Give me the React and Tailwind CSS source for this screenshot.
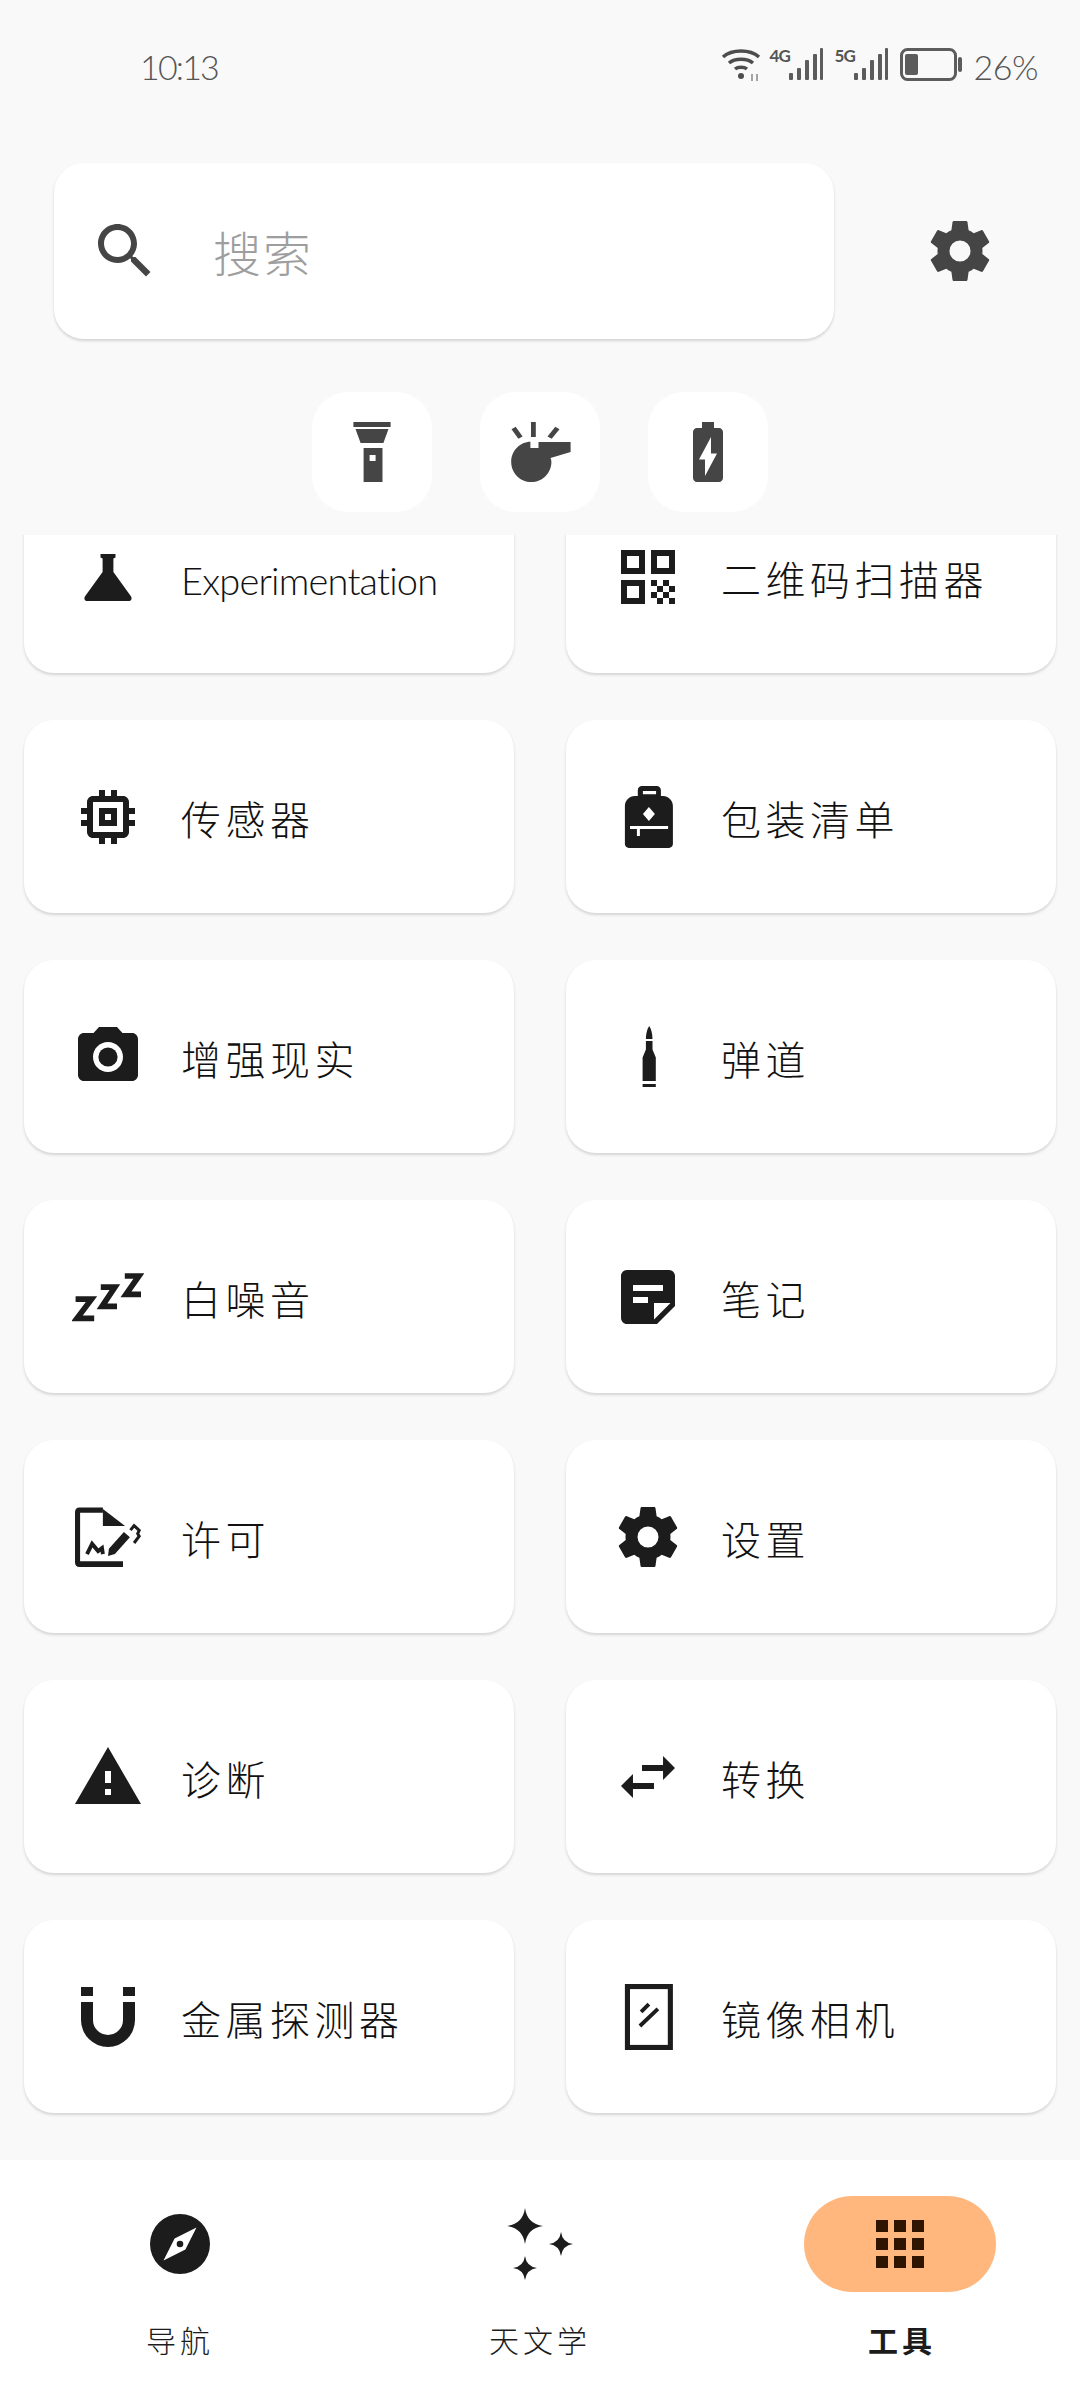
const cjk = { fontFamily: '"Lato", "Noto Sans CJK SC", sans-serif' };

function Icon({ children, className = 'text-[#1c1c1c]' }) {
  return (
    <svg viewBox="0 0 24 24" fill="currentColor" className={`w-[72px] h-[72px] shrink-0 ${className}`}>
      {children}
    </svg>
  );
}

const cog = 'M12,15.5A3.5,3.5 0 0,1 8.5,12A3.5,3.5 0 0,1 12,8.5A3.5,3.5 0 0,1 15.5,12A3.5,3.5 0 0,1 12,15.5M19.43,12.97C19.47,12.65 19.5,12.33 19.5,12C19.5,11.67 19.47,11.34 19.43,11L21.54,9.37C21.73,9.22 21.78,8.95 21.66,8.73L19.66,5.27C19.54,5.05 19.27,4.96 19.05,5.05L16.56,6.05C16.04,5.66 15.5,5.32 14.87,5.07L14.5,2.42C14.46,2.18 14.25,2 14,2H10C9.75,2 9.54,2.18 9.5,2.42L9.13,5.07C8.5,5.32 7.96,5.66 7.44,6.05L4.95,5.05C4.73,4.96 4.46,5.05 4.34,5.27L2.34,8.73C2.21,8.95 2.27,9.22 2.46,9.37L4.57,11C4.53,11.34 4.5,11.67 4.5,12C4.5,12.33 4.53,12.65 4.57,12.97L2.46,14.63C2.27,14.78 2.21,15.05 2.34,15.27L4.34,18.73C4.46,18.95 4.73,19.03 4.95,18.95L7.44,17.94C7.96,18.34 8.5,18.68 9.13,18.93L9.5,21.58C9.54,21.82 9.75,22 10,22H14C14.25,22 14.46,21.82 14.5,21.58L14.87,18.93C15.5,18.67 16.04,18.34 16.56,17.94L19.05,18.95C19.27,19.03 19.54,18.95 19.66,18.73L21.66,15.27C21.78,15.05 21.73,14.78 21.54,14.63L19.43,12.97Z';

const star = (x, y, r) =>
  `M${x} ${y - r}Q${x + r * 0.12} ${y - r * 0.12} ${x + r} ${y}Q${x + r * 0.12} ${y + r * 0.12} ${x} ${y + r}Q${x - r * 0.12} ${y + r * 0.12} ${x - r} ${y}Q${x - r * 0.12} ${y - r * 0.12} ${x} ${y - r}Z`;

const icons = {
  flask: <path d="M9.5 4.3h5v1.2l-.7.3v4.5l5.9 8.2c.4.8 0 1.5-.8 1.5H5.1c-.8 0-1.2-.7-.8-1.5l5.9-8.2V5.8l-.7-.3z" />,
  qr: <path d="M3 11h8V3H3v8zm2-6h4v4H5V5zM3 21h8v-8H3v8zm2-6h4v4H5v-4zM13 3v8h8V3h-8zm6 6h-4V5h4v4zM19 19h2v2h-2zM13 13h2v2h-2zM15 15h2v2h-2zM13 17h2v2h-2zM15 19h2v2h-2zM17 17h2v2h-2zM17 13h2v2h-2zM19 15h2v2h-2z" />,
  chip: <path d="M15 9H9v6h6V9zm-2 4h-2v-2h2v2zm8-2V9h-2V7c0-1.1-.9-2-2-2h-2V3h-2v2h-2V3H9v2H7c-1.1 0-2 .9-2 2v2H3v2h2v2H3v2h2v2c0 1.1.9 2 2 2h2v2h2v-2h2v2h2v-2h2c1.1 0 2-.9 2-2v-2h2v-2h-2v-2h2zm-4 6H7V7h10v10z" />,
  backpack: <path fillRule="evenodd" d="M10 1.700h4.900c.8 0 1.400.6 1.400 1.400V5h.7c1.800 0 3.300 1.500 3.300 3.300V21c0 .7-.6 1.300-1.300 1.300H5.600c-.7 0-1.300-.6-1.300-1.300V8.300C4.300 6.500 5.800 5 7.600 5h1V3.100c0-.8.6-1.400 1.400-1.400zM10.300 3.300v1.100h4.400V3.300zM12.300 8.700l-2 2.300 2 2.300 2-2.300zM6 15v1h2.300v2.300h1V16h9.400v-1z" />,
  camera: (
    <>
      <path d="M9 2L7.170 4H4c-1.100 0-2 .9-2 2v12c0 1.100.9 2 2 2h16c1.100 0 2-.9 2-2V6c0-1.100-.9-2-2-2h-3.170L15 2H9zm3 15c-2.760 0-5-2.240-5-5s2.240-5 5-5 5 2.240 5 5-2.240 5-5 5z" />
      <circle cx="12" cy="12" r="3.200" />
    </>
  ),
  bullet: <path d="M12.400 1.700c.7 1 1.100 2.600 1.100 4.300h-2.200c0-1.700.4-3.300 1.100-4.300zM11.300 6.700h2.200v2.800l1.100 2.700V20h-4.400v-7.800l1.100-2.700zM10.200 21h4.400v1h-4.400z" />,
  zzz: (
    <g fill="none" stroke="currentColor" strokeWidth="1.900">
      <path d="M1.200 12.700h5.300L1.700 19.100h5.700" />
      <path d="M9.600 8.700h4.700l-4.300 6.400h5" />
      <path d="M17.600 5h4.700l-4.300 6.100h5" />
    </g>
  ),
  note: <path d="M19 3H4.990C3.890 3 3 3.900 3 5l.01 14c0 1.100.89 2 1.990 2h10l6-6V5c0-1.100-.9-2-2-2zM7 8h10v2H7V8zm5 6H7v-2h5v2zm2 5.500V14h5.500L14 19.500z" />,
  sign: (
    <>
      <path d="M2.500 2.200h7.800v1.700H2.700v16.200H17V22H2.500C1.500 22 1 21.400 1 20.500V3.700c0-.9.5-1.500 1.500-1.500z" />
      <path d="M10.300 2.700l7.400 5.600h-7.400z" />
      <path d="M12 18.300l.3-2.400 5-5.600 2 1.800-5 5.600z" />
      <path d="M19.500 9.700l1.200-1.500 1.700 1.600-.5 1.100.5.800-1.700 2.300" fill="none" stroke="currentColor" strokeWidth="1" />
      <path d="M5 17.700l1.700-3.400 2 2.400 1.300-1 .3 2" fill="none" stroke="currentColor" strokeWidth="1.300" />
    </>
  ),
  cog: <path d={cog} />,
  warning: <path d="M1 21h22L12 2 1 21zm12-3h-2v-2h2v2zm0-4h-2v-4h2v4z" />,
  swap: <path d="M6.990 11L3 15l3.990 4v-3H14v-2H6.990v-3zM21 9l-3.990-4v3H10v2h7.010v3L21 9z" />,
  magnet: <path d="M3,7V13A9,9 0 0,0 12,22A9,9 0 0,0 21,13V7H17V13A5,5 0 0,1 12,18A5,5 0 0,1 7,13V7M17,5H21V2H17M3,5H7V2H3" />,
  mirror: (
    <>
      <rect x="5.150" y="1.850" width="14.300" height="20.300" fill="none" stroke="currentColor" strokeWidth="1.700" />
      <path d="M9.700 10.300l2.600-2.600M9.300 15l6-5.700" fill="none" stroke="currentColor" strokeWidth="1.300" />
    </>
  ),
};

const tools = [
  ['flask', 'Experimentation', 'qr', '二维码扫描器'],
  ['chip', '传感器', 'backpack', '包装清单'],
  ['camera', '增强现实', 'bullet', '弹道'],
  ['zzz', '白噪音', 'note', '笔记'],
  ['sign', '许可', 'cog', '设置'],
  ['warning', '诊断', 'swap', '转换'],
  ['magnet', '金属探测器', 'mirror', '镜像相机'],
];

function ToolCard({ icon, label, right }) {
  const latin = label === 'Experimentation';
  return (
    <div className={`h-[193px] bg-white rounded-[30px] shadow-[0_2px_3px_rgba(0,0,0,0.15)] flex items-center ${right ? 'pl-[46px] gap-[37px]' : 'pl-[48px] gap-[37px]'}`}>
      <Icon>{icons[icon]}</Icon>
      <span className={`leading-[48px] font-light text-[#111] relative top-[3px] ${latin ? 'text-[38px] tracking-[-0.8px]' : 'text-[40px] tracking-[4.5px]'}`}>{label}</span>
    </div>
  );
}

function Signal({ tag }) {
  return (
    <div className="flex items-start">
      <span className="text-[17px] leading-[16px] font-bold text-[#555] tracking-[-1px] w-[19px]">{tag}</span>
      <svg width="34" height="33" viewBox="0 0 34 33" fill="#5c5c5c">
        <rect x="0" y="25" width="4" height="7" rx="1" />
        <rect x="8" y="20" width="4" height="12" rx="1" />
        <rect x="16" y="12" width="4" height="20" rx="1" />
        <rect x="24" y="6" width="4" height="26" rx="1" />
        <rect x="31" y="0" width="3" height="32" rx="1" />
      </svg>
    </div>
  );
}

function StatusBar() {
  return (
    <div className="h-[163px] flex items-start justify-between pl-[140px] pr-[42px] pt-[45px] text-[#555]">
      <span className="text-[34px] leading-[44px] font-light tracking-[-1.8px]">10:13</span>
      <div className="flex items-start mt-[3px] gap-[12px]">
        <svg width="42" height="34" viewBox="0 0 42 34" fill="none" stroke="#4d4d4d" strokeWidth="3.500" className="-mr-[5px]">
          <path d="M2 9C11 1 29 1 38 9" />
          <path d="M8 15c6-5 18-5 24 0" />
          <path d="M14 21c3-2.500 9-2.500 12 0" />
          <circle cx="20" cy="28" r="3" fill="#4d4d4d" stroke="none" />
          <path d="M31 26v7M36 26v7" stroke="#888" strokeWidth="1.500" />
        </svg>
        <Signal tag="4G" />
        <Signal tag="5G" />
        <svg width="62" height="33" viewBox="0 0 62 33" fill="none">
          <rect x="1.500" y="1.500" width="54" height="30" rx="6" stroke="#5c5c5c" strokeWidth="3" />
          <rect x="5" y="6" width="13" height="21" rx="2" fill="#5c5c5c" />
          <rect x="58" y="9" width="4" height="15" rx="2" fill="#5c5c5c" />
        </svg>
        <span className="text-[34px] leading-[36px] font-light mt-[1px] tracking-[-0.5px]">26%</span>
      </div>
    </div>
  );
}

function QuickButton({ children }) {
  return (
    <div className="w-[120px] h-[120px] bg-white rounded-[36px] flex items-center justify-center">
      <Icon className="text-[#454545]">{children}</Icon>
    </div>
  );
}

function NavItem({ label, active, children }) {
  return (
    <div className="flex-1 flex flex-col items-center pt-[36px]">
      <div className={`w-[192px] h-[96px] rounded-[48px] flex items-center justify-center ${active ? 'bg-[#ffb77d]' : ''}`}>
        {children}
      </div>
      <span className={`mt-[15px] text-[30px] leading-[66px] tracking-[4px] ${active ? 'font-bold text-[#1c1c1c] ml-[4px]' : 'font-light text-[#1c1c1c]'}`}>{label}</span>
    </div>
  );
}

export default function App() {
  return (
    <div className="w-[1080px] h-[2400px] bg-[#f9f9f9] flex flex-col overflow-hidden" style={cjk}>
      <StatusBar />

      <div className="flex items-center pl-[54px]">
        <div className="w-[780px] h-[176px] bg-white rounded-[30px] shadow-[0_2px_3px_rgba(0,0,0,0.15)] flex items-center pl-[35px] gap-[52px]">
          <Icon className="text-[#454545]">
            <path d="M15.500 14h-.79l-.28-.27C15.410 12.590 16 11.110 16 9.500 16 5.910 13.090 3 9.500 3S3 5.910 3 9.500 5.910 16 9.500 16c1.610 0 3.090-.59 4.230-1.570l.27.28v.79l5 4.990L20.490 19l-4.990-5zm-6 0C7.010 14 5 11.990 5 9.500S7.010 5 9.500 5 14 7.010 14 9.500 11.990 14 9.500 14z" />
          </Icon>
          <span className="text-[48px] leading-[60px] font-light tracking-[2px] text-[#9e9e9e] relative top-[3px]">搜索</span>
        </div>
        <div className="ml-[90px]">
          <Icon className="text-[#454545]"><path d={cog} /></Icon>
        </div>
      </div>

      <div className="flex justify-center gap-[48px] mt-[53px]">
        <QuickButton>
          <path fillRule="evenodd" d="M5.800 2h12.400v1.700H5.800zM6.500 4.300h11L15.800 9H8.200zM9.200 10.700h6.300V22H9.200zM11.200 13v2h2v-2z" />
        </QuickButton>
        <QuickButton>
          <path d="M9 2h1.600v5H9zM2.500 4.400l1.400-.8 2.300 3.200-1.400.8zM17.100 3.600l1.400.8-2.600 3.200-1.400-.8z" />
          <path d="M8.800 8.600v2.100h2.700V8.700h10.700V12l-6.700 2c.2.400.3.800.3 1.300 0 3.700-3 6.700-6.700 6.700s-6.700-3-6.700-6.700 3-6.700 6.400-6.700z" />
        </QuickButton>
        <QuickButton>
          <path d="M15.670 4H14V2h-4v2H8.330C7.600 4 7 4.600 7 5.330v15.330C7 21.400 7.600 22 8.330 22h7.330c.74 0 1.340-.6 1.340-1.330V5.330C17 4.600 16.400 4 15.670 4zM11 20v-5.500H9L13 7v5.500h2L11 20z" />
        </QuickButton>
      </div>

      <div className="mt-[23px] flex-1 overflow-hidden">
        <div className="grid grid-cols-2 gap-x-[52px] gap-y-[47px] px-[24px] -mt-[55px]">
          {tools.map(([a, la, b, lb]) => [
            <ToolCard key={la} icon={a} label={la} />,
            <ToolCard key={lb} icon={b} label={lb} right />,
          ])}
        </div>
      </div>

      <div className="h-[240px] bg-white flex shrink-0">
        <NavItem label="导航">
          <Icon>
            <path fillRule="evenodd" d="M12 2a10 10 0 1 0 0 20 10 10 0 0 0 0-20zM17.500 6.500l-3.700 7.300-7.300 3.700 3.700-7.300z" />
            <circle cx="12" cy="12" r="1.100" />
          </Icon>
        </NavItem>
        <NavItem label="天文学">
          <Icon>
            <path d={star(7, 6, 6)} />
            <path d={star(19, 12, 4)} />
            <path d={star(7, 20, 4)} />
          </Icon>
        </NavItem>
        <NavItem label="工具" active>
          <Icon className="text-[#2f1500]">
            <path d="M4 8h4V4H4v4zm6 12h4v-4h-4v4zm-6 0h4v-4H4v4zm0-6h4v-4H4v4zm6 0h4v-4h-4v4zm6-10v4h4V4h-4zm-6 4h4V4h-4v4zm6 6h4v-4h-4v4zm0 6h4v-4h-4v4z" />
          </Icon>
        </NavItem>
      </div>
    </div>
  );
}
